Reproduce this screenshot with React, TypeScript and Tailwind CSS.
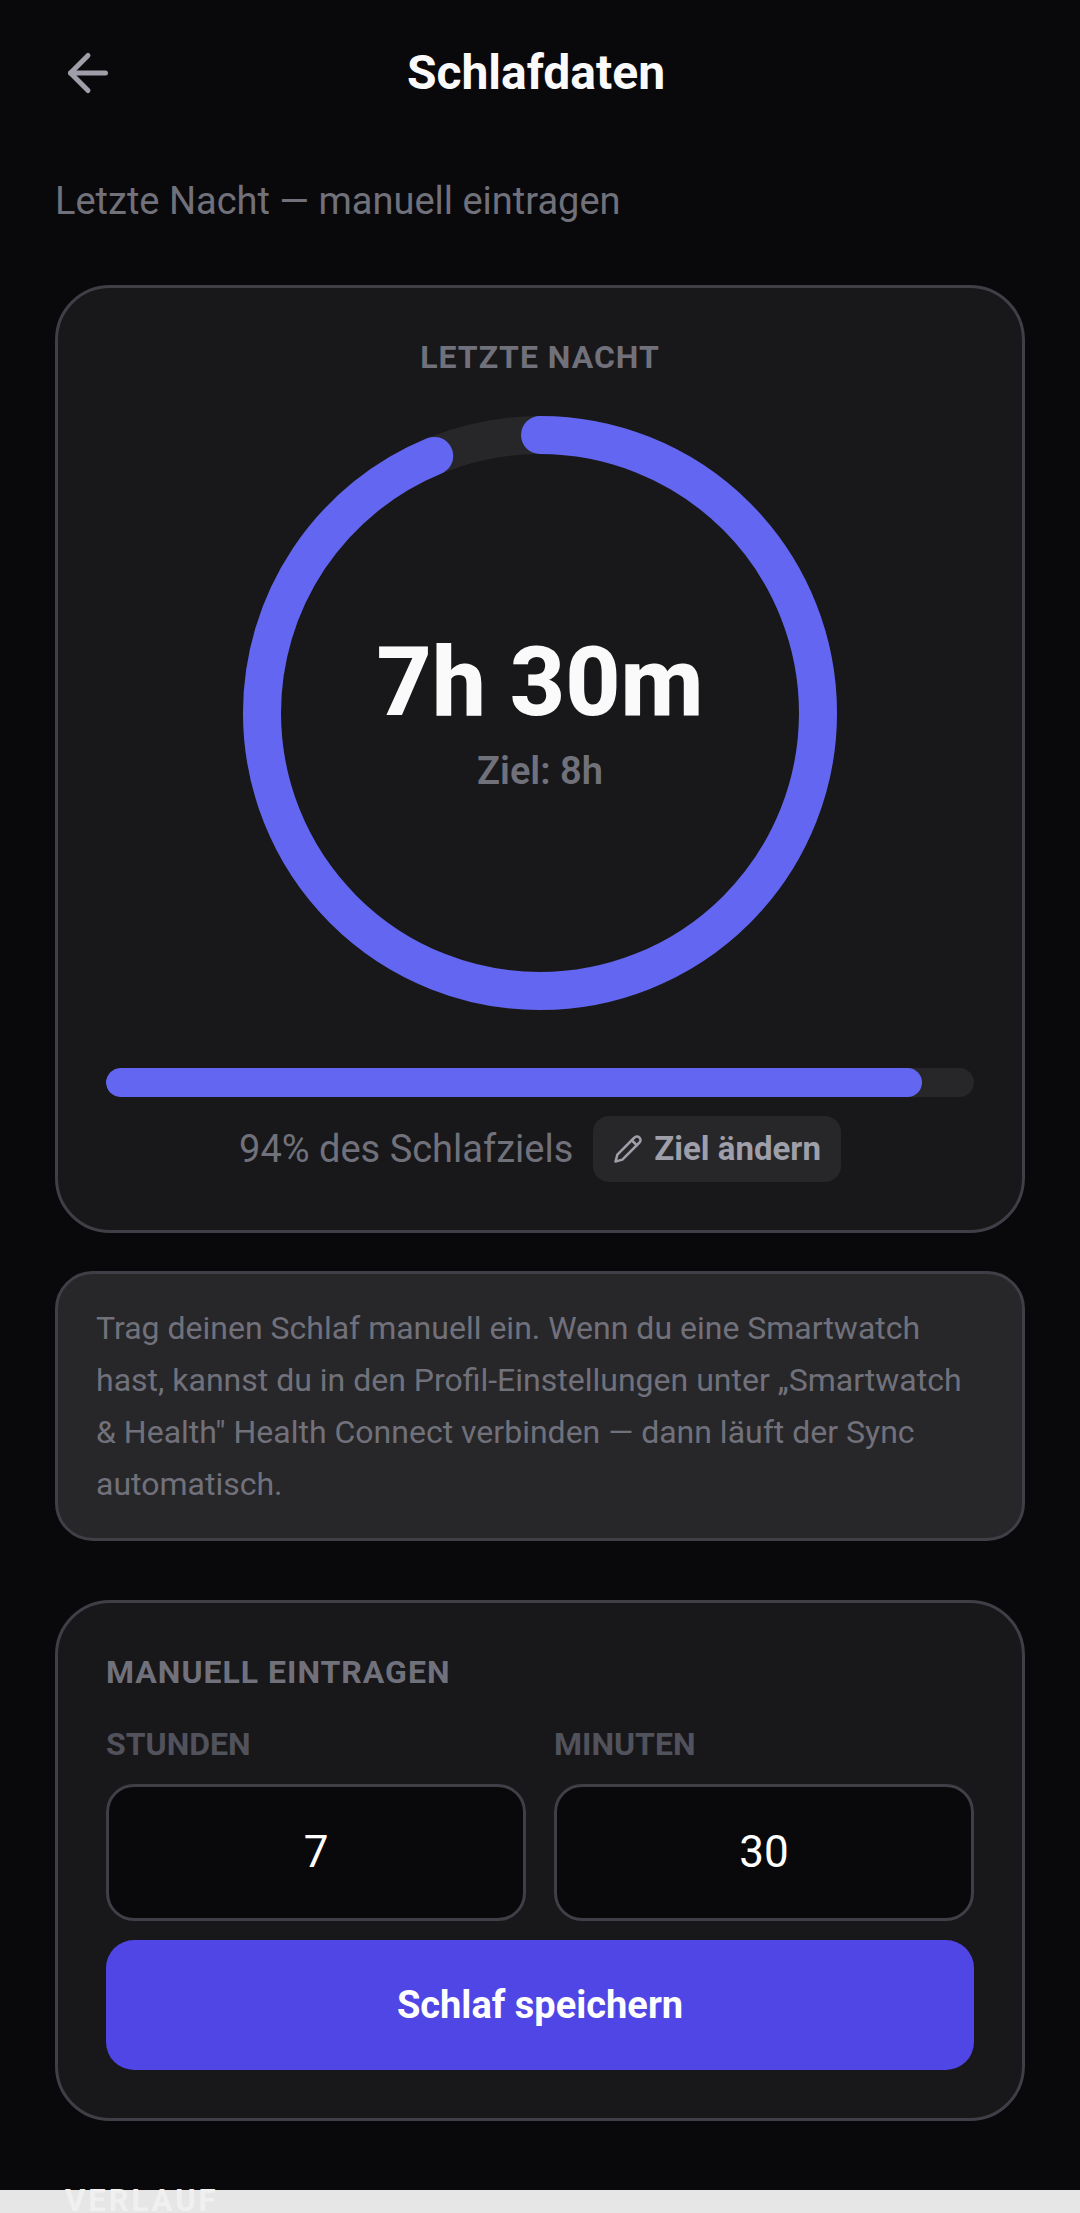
import { useState } from 'react';
import { ArrowLeft } from 'lucide-react';

const GOAL_HOURS = 8;
const RING_SIZE = 594;
const RING_STROKE = 38;
const RING_RADIUS = (RING_SIZE - RING_STROKE) / 2;
const RING_LENGTH = 2 * Math.PI * RING_RADIUS;

function PencilIcon() {
  return (
    <svg
      width="30"
      height="30"
      viewBox="0 0 24 24"
      fill="none"
      stroke="currentColor"
      strokeWidth="2"
      strokeLinecap="round"
      strokeLinejoin="round"
      aria-hidden="true"
    >
      <path d="M17 3a2.85 2.83 0 1 1 4 4L7.5 20.5 2 22l1.5-5.5Z" />
      <path d="m15 5 4 4" />
    </svg>
  );
}

function SleepRing({ hours, minutes }: { hours: number; minutes: number }) {
  const progress = Math.min((hours + minutes / 60) / GOAL_HOURS, 1);

  return (
    <div className="relative mx-auto mt-[38px] max-w-full">
      <svg width={RING_SIZE} height={RING_SIZE} viewBox={`0 0 ${RING_SIZE} ${RING_SIZE}`} className="block max-w-full">
        <g fill="none" strokeWidth={RING_STROKE} transform={`rotate(-90 ${RING_SIZE / 2} ${RING_SIZE / 2})`}>
          <circle cx={RING_SIZE / 2} cy={RING_SIZE / 2} r={RING_RADIUS} stroke="#27272a" />
          <circle
            cx={RING_SIZE / 2}
            cy={RING_SIZE / 2}
            r={RING_RADIUS}
            stroke="#6366f1"
            strokeLinecap="round"
            strokeDasharray={RING_LENGTH}
            strokeDashoffset={RING_LENGTH * (1 - progress)}
          />
        </g>
      </svg>
      <div className="absolute inset-0 flex flex-col items-center justify-center gap-4">
        <p className="text-[96px] leading-[100px] font-extrabold text-zinc-50">
          {hours}h {minutes}m
        </p>
        <p className="text-[38px] leading-[46px] font-semibold text-zinc-500">Ziel: {GOAL_HOURS}h</p>
      </div>
    </div>
  );
}

function NumberField({ id, label, value, onChange }: {
  id: string;
  label: string;
  value: string;
  onChange: (value: string) => void;
}) {
  return (
    <div className="flex min-w-0 flex-1 flex-col gap-[19px]">
      <label htmlFor={id} className="text-[32px] leading-[42px] font-bold text-zinc-600">
        {label}
      </label>
      <input
        id={id}
        type="text"
        inputMode="numeric"
        value={value}
        onChange={(e) => onChange(e.target.value)}
        className="w-full rounded-[28px] border-[3px] border-zinc-700 bg-zinc-950 px-8 py-[39px] text-center text-[44px] leading-[53px] text-white outline-none"
      />
    </div>
  );
}

export default function App() {
  const [hours, setHours] = useState('7');
  const [minutes, setMinutes] = useState('30');
  const [saved, setSaved] = useState({ hours: 7, minutes: 30 });

  const percent = Math.min(Math.round(((saved.hours + saved.minutes / 60) / GOAL_HOURS) * 100), 100);

  return (
    <div className="flex min-h-screen flex-col bg-zinc-950 font-[Roboto,sans-serif]">
      <header className="flex items-center justify-between px-11 pt-[29px]">
        <button type="button" aria-label="Zurück" className="flex size-[88px] items-center justify-center text-zinc-400">
          <ArrowLeft size={60} />
        </button>
        <h1 className="text-[48px] leading-[58px] font-bold text-zinc-50">Schlafdaten</h1>
        <div className="w-24" />
      </header>

      <main className="flex flex-1 flex-col px-[55px] pt-[61px] pb-[69px]">
        <p className="text-[38px] leading-[46px] text-zinc-500">Letzte Nacht — manuell eintragen</p>

        <section className="mt-[61px] flex flex-col rounded-[55px] border-[3px] border-zinc-700 bg-zinc-900 p-12">
          <h2 className="text-center text-[32px] leading-[42px] font-bold tracking-[1px] text-zinc-500">
            LETZTE NACHT
          </h2>
          <SleepRing hours={saved.hours} minutes={saved.minutes} />
          <div className="mt-[58px] h-[29px] overflow-hidden rounded-full bg-zinc-800">
            <div className="h-full rounded-full bg-[#6366f1]" style={{ width: `${percent}%` }} />
          </div>
          <div className="mt-[19px] flex flex-wrap items-center justify-center gap-5">
            <p className="text-[38px] leading-[46px] text-zinc-500">{percent}% des Schlafziels</p>
            <button
              type="button"
              className="flex items-center gap-[11px] rounded-2xl bg-zinc-800 px-5 py-3 text-[33px] leading-[42px] font-bold text-zinc-400"
            >
              <PencilIcon />
              Ziel ändern
            </button>
          </div>
        </section>

        <p className="mt-[38px] rounded-[38px] border-[3px] border-zinc-700 bg-zinc-800 px-[38px] py-7 text-[32px] leading-[52px] text-zinc-500">
          Trag deinen Schlaf manuell ein. Wenn du eine Smartwatch hast, kannst du in den Profil-Einstellungen unter
          „Smartwatch & Health" Health Connect verbinden — dann läuft der Sync automatisch.
        </p>

        <form
          className="mt-[59px] rounded-[55px] border-[3px] border-zinc-700 bg-zinc-900 p-12"
          onSubmit={(e) => {
            e.preventDefault();
            setSaved({ hours: Number(hours) || 0, minutes: Number(minutes) || 0 });
          }}
        >
          <h2 className="text-[32px] leading-[42px] font-bold tracking-[1px] text-zinc-500">MANUELL EINTRAGEN</h2>
          <div className="mt-[30px] flex gap-7">
            <NumberField id="hours" label="STUNDEN" value={hours} onChange={setHours} />
            <NumberField id="minutes" label="MINUTEN" value={minutes} onChange={setMinutes} />
          </div>
          <button
            type="submit"
            className="mt-[19px] w-full rounded-[28px] bg-[#4f46e5] py-[42px] text-[38px] leading-[46px] font-bold text-white"
          >
            Schlaf speichern
          </button>
        </form>
      </main>

      <footer className="bg-[#e6e6e6] px-[65px] pb-px">
        <h2 className="text-[31px] leading-[22px] font-bold tracking-[3px] text-[#f0f0f0]">VERLAUF</h2>
      </footer>
    </div>
  );
}
